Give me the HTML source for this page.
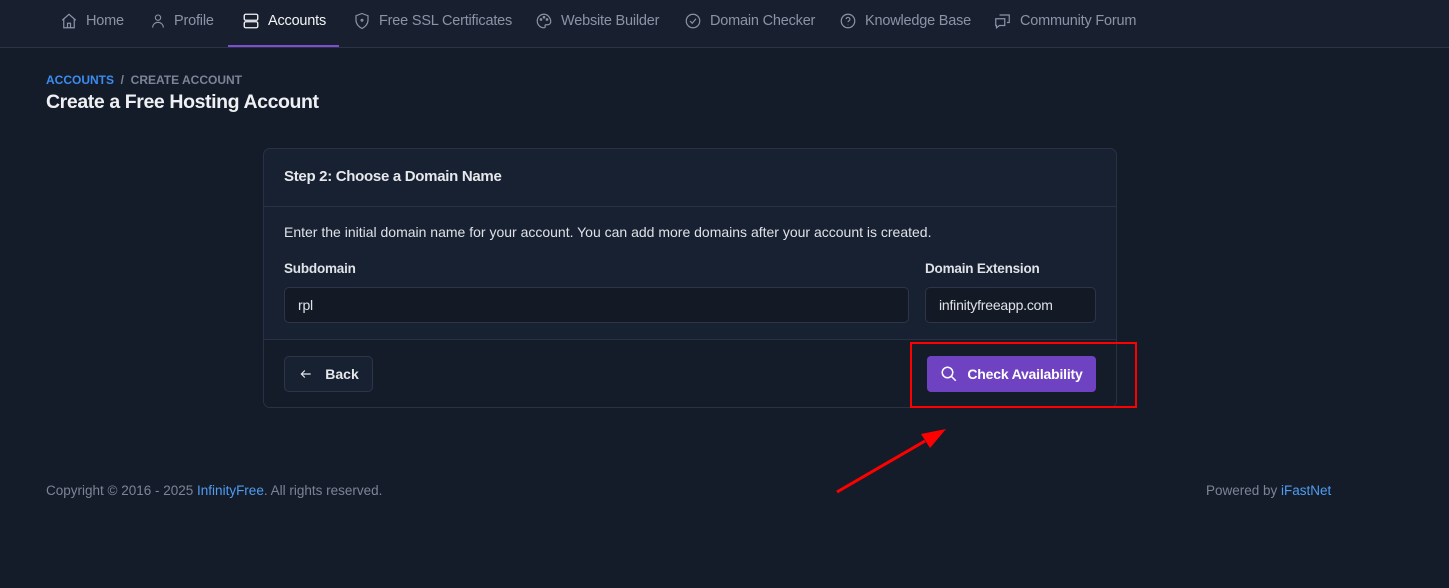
<!DOCTYPE html>
<html><head><meta charset="utf-8"><style>
*{box-sizing:border-box;margin:0;padding:0}
body{width:1449px;height:588px;background:#151c29;font-family:"Liberation Sans",sans-serif;color:#e5e7eb;position:relative;overflow:hidden;font-size:14px}
.nav{height:48px;background:#182030;border-bottom:1px solid #2a3446;position:relative}
.nav .it{position:absolute;top:0;height:41px;display:flex;align-items:center;color:#8b94a5;font-size:14.5px;letter-spacing:-0.2px}
.nav .it svg{margin-right:8px}
.nav .act{color:#f3f4f6}
.nav .bar{position:absolute;left:228px;top:45px;width:111px;height:2px;background:#7c4dcc}
.bc{position:absolute;left:46px;top:73px;font-size:12px;font-weight:bold;color:#7c8597;letter-spacing:0}
.bc b{color:#3b8cf0}
h1{position:absolute;left:46px;top:91px;font-size:19.5px;font-weight:bold;color:#eef0f3;letter-spacing:-0.4px}
.card{position:absolute;left:263px;top:148px;width:854px;height:260px;border:1px solid #283244;border-radius:7px;background:#182131;overflow:hidden}
.ch{height:58px;border-bottom:1px solid #283244;padding:19px 20px;font-weight:bold;font-size:15px;letter-spacing:-0.3px;color:#e6e8ec}
.cb{padding:17px 20px;height:132px;font-size:14px;color:#dfe2e7;position:relative}
.lbl{position:absolute;top:54px;font-weight:bold;font-size:13.5px;letter-spacing:-0.2px}
.inp{position:absolute;top:80px;height:36px;border:1px solid #2c3648;border-radius:5px;background:#131a26;padding:9px 13px;font-size:14px;letter-spacing:-0.2px}
.cf{position:absolute;top:190px;left:0;right:0;height:70px;border-top:1px solid #283244;background:#151c29}
.back{position:absolute;left:20px;top:16px;width:89px;height:36px;border:1px solid #2c3648;border-radius:5px;background:#182131;display:flex;align-items:center;justify-content:center;font-weight:bold;font-size:14px;color:#e5e7eb}
.chk{position:absolute;left:663px;top:16px;width:169px;height:36px;border-radius:4px;background:#6f42c1;display:flex;align-items:center;justify-content:center;font-weight:bold;font-size:14px;color:#fff;letter-spacing:-0.2px}
.foot{position:absolute;top:483px;font-size:13.5px;color:#7c8597}
.foot a{color:#4f9cf0}
</style></head><body>
<div class="nav">
 <div class="it" style="left:60px"><svg width="18" height="18" viewBox="0 0 24 24" fill="none" stroke="#8b94a5" stroke-width="1.6"><path d="M3 11l9-8 9 8M5 9v12h14V9M10 21v-6h4v6"/></svg>Home</div>
 <div class="it" style="left:150px"><svg width="16" height="18" viewBox="0 0 24 24" fill="none" stroke="#8b94a5" stroke-width="1.6"><circle cx="12" cy="7" r="4"/><path d="M4 22c0-5 4-8 8-8s8 3 8 8"/></svg>Profile</div>
 <div class="it act" style="left:242px"><svg width="18" height="18" viewBox="0 0 24 24" fill="none" stroke="#f3f4f6" stroke-width="1.8"><rect x="3" y="3" width="18" height="8" rx="2"/><rect x="3" y="13" width="18" height="8" rx="2"/></svg>Accounts</div>
 <div class="it" style="left:353px"><svg width="18" height="18" viewBox="0 0 24 24" fill="none" stroke="#8b94a5" stroke-width="1.6"><path d="M12 2l8 3v6c0 5-4 9-8 11-4-2-8-6-8-11V5z"/><circle cx="12" cy="11" r="1.2"/></svg>Free SSL Certificates</div>
 <div class="it" style="left:535px"><svg width="18" height="18" viewBox="0 0 24 24" fill="none" stroke="#8b94a5" stroke-width="1.6"><path d="M12 3a9 9 0 100 18c1.5 0 2-1 1.5-2s0-2 1.5-2h2a4 4 0 004-4c0-5-4-10-9-10z"/><circle cx="8" cy="10" r="1"/><circle cx="12" cy="7" r="1"/><circle cx="16" cy="10" r="1"/></svg>Website Builder</div>
 <div class="it" style="left:684px"><svg width="18" height="18" viewBox="0 0 24 24" fill="none" stroke="#8b94a5" stroke-width="1.6"><circle cx="12" cy="12" r="9"/><path d="M8 12l3 3 5-6"/></svg>Domain Checker</div>
 <div class="it" style="left:839px"><svg width="18" height="18" viewBox="0 0 24 24" fill="none" stroke="#8b94a5" stroke-width="1.6"><circle cx="12" cy="12" r="9"/><path d="M9.5 9.5a2.5 2.5 0 115 .5c0 1.5-2.5 2-2.5 3.5M12 17v.5"/></svg>Knowledge Base</div>
 <div class="it" style="left:993px"><svg width="19" height="18" viewBox="0 0 24 24" fill="none" stroke="#8b94a5" stroke-width="1.6"><path d="M8 4h13v10h-3M3 9h12v9H8l-4 3v-3H3z"/></svg>Community Forum</div>
 <div class="bar"></div>
</div>
<div class="bc"><b>ACCOUNTS</b> &nbsp;/&nbsp; CREATE ACCOUNT</div>
<h1>Create a Free Hosting Account</h1>
<div class="card">
 <div class="ch">Step 2: Choose a Domain Name</div>
 <div class="cb">Enter the initial domain name for your account. You can add more domains after your account is created.
  <div class="lbl" style="left:20px">Subdomain</div>
  <div class="lbl" style="left:661px">Domain Extension</div>
  <div class="inp" style="left:20px;width:625px">rpl</div>
  <div class="inp" style="left:661px;width:171px">infinityfreeapp.com</div>
 </div>
 <div class="cf">
  <div class="back"><svg width="16" height="14" viewBox="0 0 24 24" fill="none" stroke="#e5e7eb" stroke-width="2" style="margin-right:11px"><path d="M20 12H4M10 6l-6 6 6 6"/></svg>Back</div>
  <div class="chk"><svg width="18" height="18" viewBox="0 0 24 24" fill="none" stroke="#fff" stroke-width="2" style="margin-right:9px"><circle cx="10" cy="10" r="7"/><path d="M15 15l6 6"/></svg>Check Availability</div>
 </div>
</div>
<div style="position:absolute;left:910px;top:342px;width:227px;height:66px;border:2px solid #f00"></div>
<svg style="position:absolute;left:0;top:0" width="1449" height="588"><line x1="837" y1="492" x2="925" y2="441" stroke="#f00" stroke-width="3"/><polygon points="946,429 921,434 930,448" fill="#f00"/></svg>
<div class="foot" style="left:46px">Copyright © 2016 - 2025 <a>InfinityFree</a>. All rights reserved.</div>
<div class="foot" style="left:1206px">Powered by <a>iFastNet</a></div>
</body></html>
